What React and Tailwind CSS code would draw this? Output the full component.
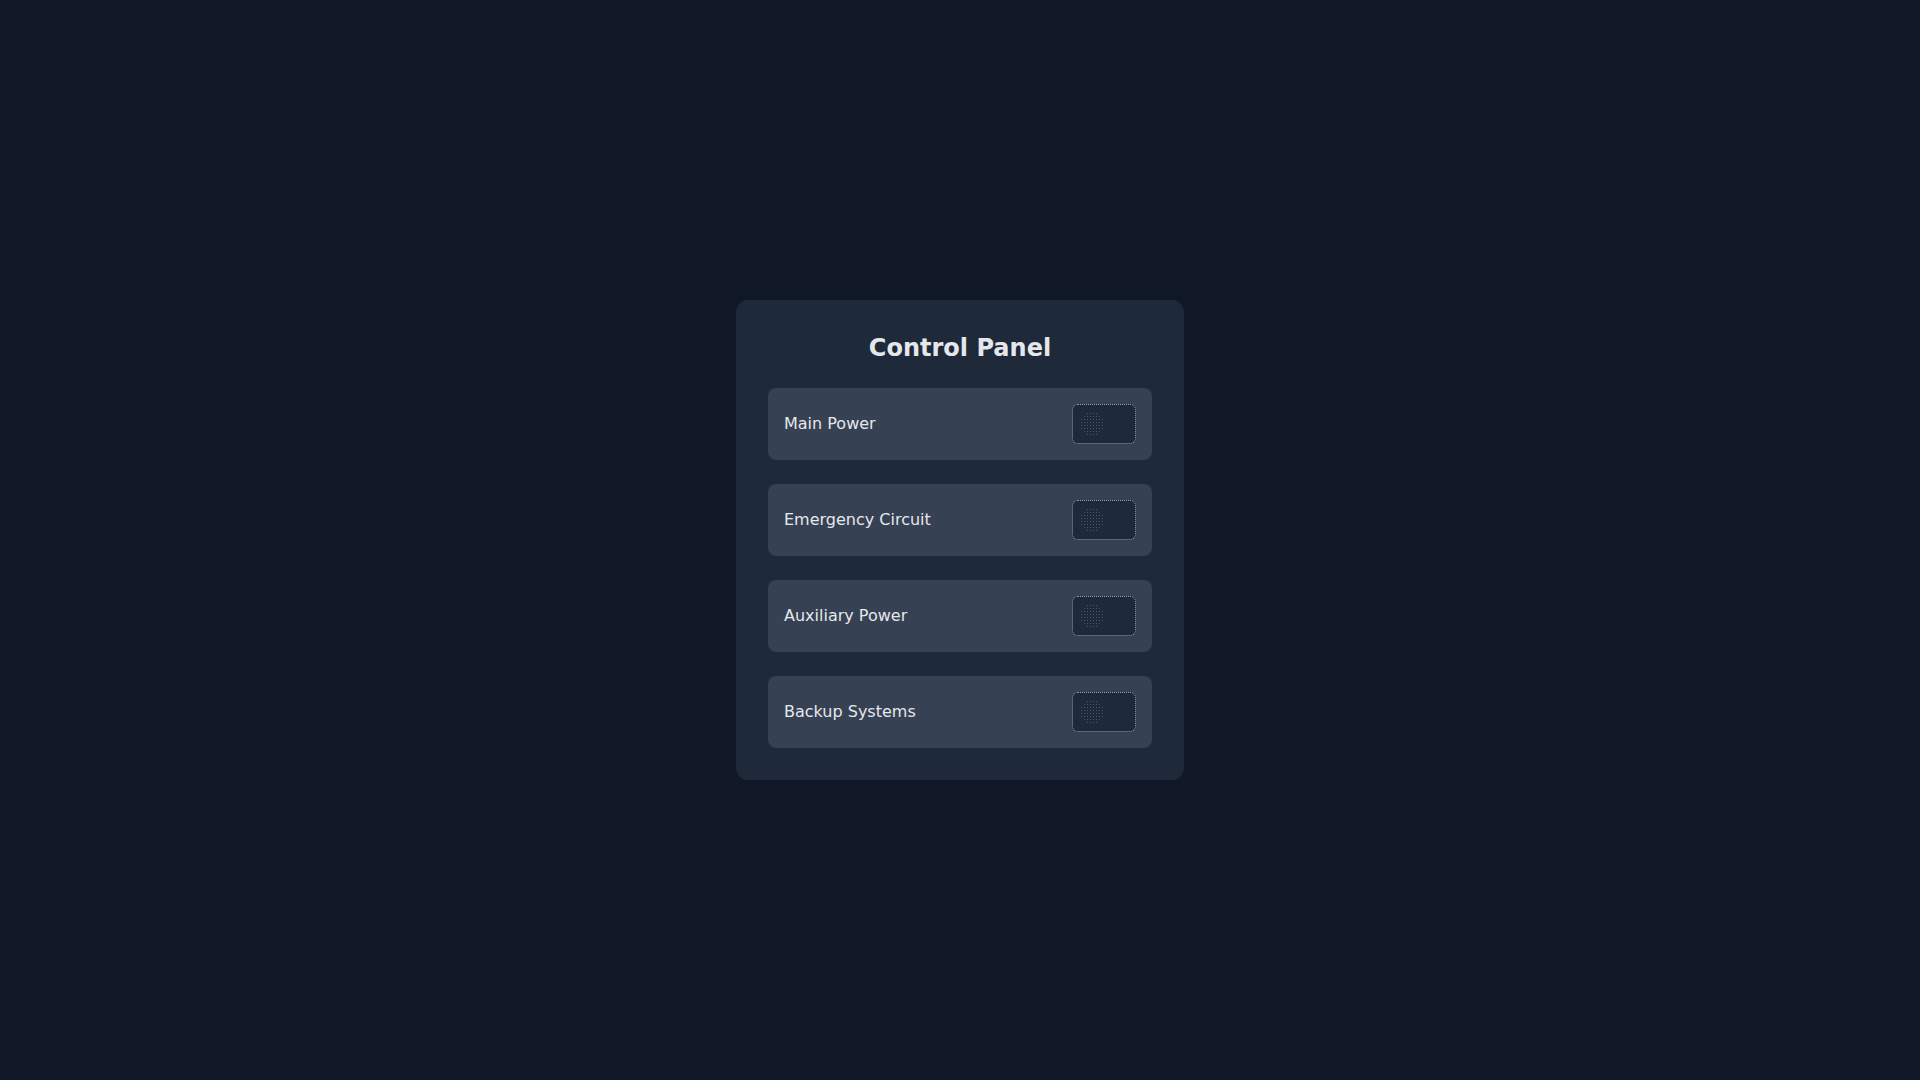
const switches = [
  { key: "main", label: "Main Power" },
  { key: "emergency", label: "Emergency Circuit" },
  { key: "aux", label: "Auxiliary Power" },
  { key: "backup", label: "Backup Systems" },
];

function Toggle() {
  return (
    <div className="flex h-10 w-16 items-center rounded-md border border-dotted border-gray-400 bg-gray-800 px-[7px]">
      <span className="h-6 w-6 rounded-full bg-[radial-gradient(circle,#4b5563_0.8px,transparent_1px)] bg-[length:3px_3px]" />
    </div>
  );
}

function App() {
  return (
    <div className="flex min-h-screen items-center justify-center bg-gray-900 font-['DejaVu_Sans',sans-serif]">
      <div className="w-[448px] rounded-xl bg-gray-800 p-8">
        <h1 className="mb-6 text-center text-2xl font-bold text-gray-200">Control Panel</h1>
        <div className="space-y-6">
          {switches.map((item) => (
            <div key={item.key} className="flex items-center justify-between rounded-lg bg-gray-700 p-4">
              <span className="text-base text-gray-200">{item.label}</span>
              <Toggle />
            </div>
          ))}
        </div>
      </div>
    </div>
  );
}

export default App;
